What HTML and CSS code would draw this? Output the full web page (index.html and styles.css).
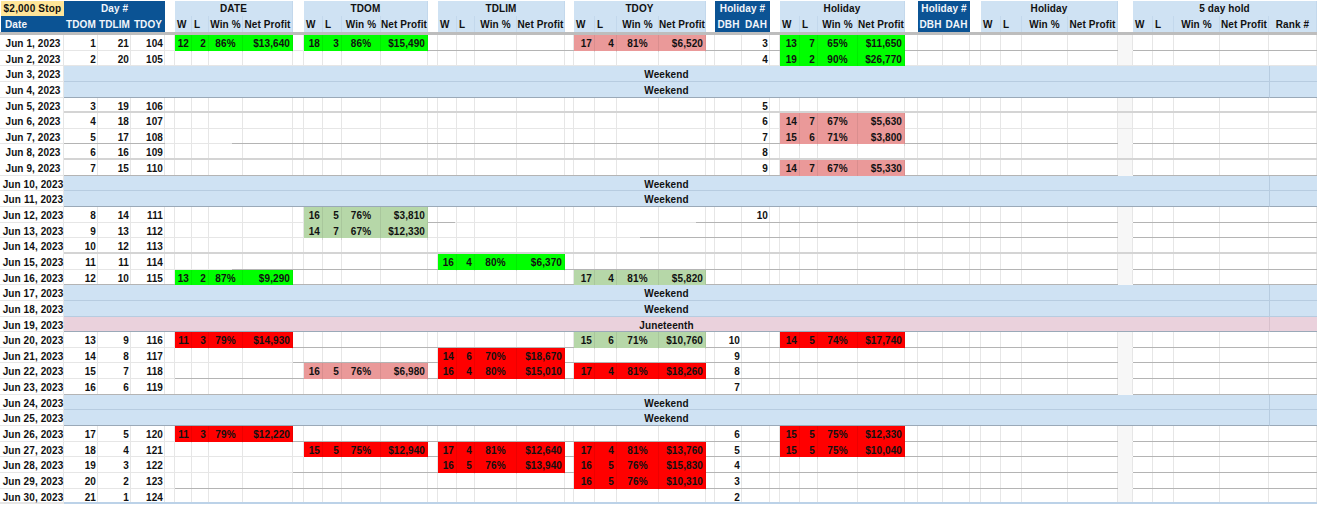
FILE: index.html
```html
<!DOCTYPE html>
<html lang="en">
<head>
<meta charset="utf-8">
<title>June 2023 seasonality sheet</title>
<link rel="stylesheet" href="styles.css">
</head>
<body>
<main class="sheet">
  <div class="hrow top">
    <div class="stop">$2,000 Stop</div>
    <div class="navy days-h">Day #</div>
    <div class="pale g-date">DATE</div>
    <div class="pale g-tdom">TDOM</div>
    <div class="pale g-tdlim">TDLIM</div>
    <div class="pale g-tdoy">TDOY</div>
    <div class="navy g-hn1">Holiday #</div>
    <div class="pale g-hol1">Holiday</div>
    <div class="navy g-hn2">Holiday #</div>
    <div class="pale g-hol2">Holiday</div>
    <div class="pale g-hold">5 day hold</div>
  </div>
  <div class="hrow sub">
    <div class="navy date-h">Date</div><div class="navy">TDOM</div><div class="navy">TDLIM</div><div class="navy">TDOY</div>
    <div class="pale cell-l c6">W</div><div class="pale cell-l">L</div><div class="pale">Win %</div><div class="pale">Net Profit</div>
    <div class="pale cell-l c11">W</div><div class="pale cell-l">L</div><div class="pale">Win %</div><div class="pale">Net Profit</div>
    <div class="pale cell-l c16">W</div><div class="pale cell-l">L</div><div class="pale">Win %</div><div class="pale">Net Profit</div>
    <div class="pale cell-l c21">W</div><div class="pale cell-l">L</div><div class="pale">Win %</div><div class="pale">Net Profit</div>
    <div class="navy c26">DBH</div><div class="navy">DAH</div>
    <div class="pale cell-l c29">W</div><div class="pale cell-l">L</div><div class="pale">Win %</div><div class="pale">Net Profit</div>
    <div class="navy c34">DBH</div><div class="navy">DAH</div>
    <div class="pale cell-l c37">W</div><div class="pale cell-l">L</div><div class="pale">Win %</div><div class="pale">Net Profit</div>
    <div class="pale cell-l c42">W</div><div class="pale cell-l">L</div><div class="pale">Win %</div><div class="pale">Net Profit</div><div class="pale">Rank #</div>
  </div>
  <div class="rule"></div>
  <div class="body">
    <div class="guides" aria-hidden="true">
      <i></i><i></i><i></i><i></i><i></i><i></i><i></i><i></i><i></i><i></i>
      <i></i><i></i><i></i><i></i><i></i><i></i><i></i><i></i><i></i><i></i>
      <i></i><i></i><i></i><i></i><i></i><i></i><i></i><i></i><i></i><i></i>
      <i></i><i></i><i></i><i></i><i></i><i></i><i></i><i></i><i></i><i></i>
      <i class="wide"></i><i></i><i></i><i></i><i></i><i></i>
    </div>

    <div class="row from428"><b>Jun 1, 2023</b><span>1</span><span>21</span><span>104</span>
      <div class="res g-date green"><span>12</span><span>2</span><span>86%</span><span>$13,640</span></div>
      <div class="res g-tdom green"><span>18</span><span>3</span><span>86%</span><span>$15,490</span></div>
      <div class="res g-tdoy rose"><span>17</span><span>4</span><span>81%</span><span>$6,520</span></div>
      <span class="dah">3</span>
      <div class="res g-hol1 green"><span>13</span><span>7</span><span>65%</span><span>$11,650</span></div>
    </div>
    <div class="row"><b>Jun 2, 2023</b><span>2</span><span>20</span><span>105</span>
      <span class="dah">4</span>
      <div class="res g-hol1 green"><span>19</span><span>2</span><span>90%</span><span>$26,770</span></div>
    </div>
    <div class="row"><b>Jun 3, 2023</b><div class="band">Weekend</div><div class="band-end"></div></div>
    <div class="row"><b>Jun 4, 2023</b><div class="band closing">Weekend</div><div class="band-end closing"></div></div>
    <div class="row thick"><b>Jun 5, 2023</b><span>3</span><span>19</span><span>106</span><span class="dah">5</span></div>
    <div class="row"><b>Jun 6, 2023</b><span>4</span><span>18</span><span>107</span><span class="dah">6</span>
      <div class="res g-hol1 rose"><span>14</span><span>7</span><span>67%</span><span>$5,630</span></div>
    </div>
    <div class="row from232"><b>Jun 7, 2023</b><span class="ul">5</span><span class="ul">17</span><span class="ul">108</span><span class="dah">7</span>
      <div class="res g-hol1 rose"><span>15</span><span>6</span><span>71%</span><span>$3,800</span></div>
    </div>
    <div class="row thick"><b>Jun 8, 2023</b><span>6</span><span>16</span><span>109</span><span class="dah">8</span></div>
    <div class="row from64"><b>Jun 9, 2023</b><span>7</span><span>15</span><span>110</span><span class="dah">9</span>
      <div class="res g-hol1 rose"><span>14</span><span>7</span><span>67%</span><span>$5,330</span></div>
    </div>
    <div class="row"><b>Jun 10, 2023</b><div class="band">Weekend</div><div class="band-end"></div></div>
    <div class="row"><b>Jun 11, 2023</b><div class="band closing">Weekend</div><div class="band-end closing"></div></div>
    <div class="row split"><b>Jun 12, 2023</b><span>8</span><span>14</span><span>111</span>
      <div class="res g-tdom sage"><span>16</span><span>5</span><span>76%</span><span>$3,810</span></div>
      <span class="dah">10</span>
    </div>
    <div class="row from640"><b>Jun 13, 2023</b><span>9</span><span>13</span><span>112</span>
      <div class="res g-tdom sage"><span>14</span><span>7</span><span>67%</span><span>$12,330</span></div>
    </div>
    <div class="row thick"><b>Jun 14, 2023</b><span>10</span><span>12</span><span>113</span></div>
    <div class="row from232"><b>Jun 15, 2023</b><span>11</span><span>11</span><span>114</span>
      <div class="res g-tdlim green"><span>16</span><span>4</span><span>80%</span><span>$6,370</span></div>
    </div>
    <div class="row from64"><b>Jun 16, 2023</b><span>12</span><span>10</span><span>115</span>
      <div class="res g-date green"><span>13</span><span>2</span><span>87%</span><span>$9,290</span></div>
      <div class="res g-tdoy sage"><span>17</span><span>4</span><span>81%</span><span>$5,820</span></div>
    </div>
    <div class="row"><b>Jun 17, 2023</b><div class="band">Weekend</div><div class="band-end"></div></div>
    <div class="row"><b>Jun 18, 2023</b><div class="band">Weekend</div><div class="band-end"></div></div>
    <div class="row"><b>Jun 19, 2023</b><div class="band holiday closing">Juneteenth</div><div class="band-end holiday closing"></div></div>
    <div class="row from175"><b>Jun 20, 2023</b><span>13</span><span>9</span><span>116</span>
      <div class="res g-date red"><span>11</span><span>3</span><span>79%</span><span>$14,930</span></div>
      <div class="res g-tdoy sage"><span>15</span><span>6</span><span>71%</span><span>$10,760</span></div>
      <span class="dbh">10</span>
      <div class="res g-hol1 red"><span>14</span><span>5</span><span>74%</span><span>$17,740</span></div>
    </div>
    <div class="row from293"><b>Jun 21, 2023</b><span>14</span><span>8</span><span>117</span>
      <div class="res g-tdlim red"><span>14</span><span>6</span><span>70%</span><span>$18,670</span></div>
      <span class="dbh">9</span>
    </div>
    <div class="row from175"><b>Jun 22, 2023</b><span>15</span><span>7</span><span>118</span>
      <div class="res g-tdom rose"><span>16</span><span>5</span><span>76%</span><span>$6,980</span></div>
      <div class="res g-tdlim red"><span>16</span><span>4</span><span>80%</span><span>$15,010</span></div>
      <div class="res g-tdoy red"><span>17</span><span>4</span><span>81%</span><span>$18,260</span></div>
      <span class="dbh">8</span>
    </div>
    <div class="row from64"><b>Jun 23, 2023</b><span>16</span><span>6</span><span>119</span><span class="dbh">7</span></div>
    <div class="row"><b>Jun 24, 2023</b><div class="band">Weekend</div><div class="band-end"></div></div>
    <div class="row"><b>Jun 25, 2023</b><div class="band closing">Weekend</div><div class="band-end closing"></div></div>
    <div class="row from293"><b>Jun 26, 2023</b><span>17</span><span>5</span><span>120</span>
      <div class="res g-date red"><span>11</span><span>3</span><span>79%</span><span>$12,220</span></div>
      <span class="dbh">6</span>
      <div class="res g-hol1 red"><span>15</span><span>5</span><span>75%</span><span>$12,330</span></div>
    </div>
    <div class="row from428"><b>Jun 27, 2023</b><span>18</span><span>4</span><span>121</span>
      <div class="res g-tdom red"><span>15</span><span>5</span><span>75%</span><span>$12,940</span></div>
      <div class="res g-tdlim red"><span>17</span><span>4</span><span>81%</span><span>$12,640</span></div>
      <div class="res g-tdoy red"><span>17</span><span>4</span><span>81%</span><span>$13,760</span></div>
      <span class="dbh">5</span>
      <div class="res g-hol1 red"><span>15</span><span>5</span><span>75%</span><span>$10,040</span></div>
    </div>
    <div class="row from293"><b>Jun 28, 2023</b><span>19</span><span>3</span><span>122</span>
      <div class="res g-tdlim red"><span>16</span><span>5</span><span>76%</span><span>$13,940</span></div>
      <div class="res g-tdoy red"><span>16</span><span>5</span><span>76%</span><span>$15,830</span></div>
      <span class="dbh">4</span>
    </div>
    <div class="row from175"><b>Jun 29, 2023</b><span>20</span><span>2</span><span>123</span>
      <div class="res g-tdoy red"><span>16</span><span>5</span><span>76%</span><span>$10,310</span></div>
      <span class="dbh">3</span>
    </div>
    <div class="row last"><b>Jun 30, 2023</b><span>21</span><span>1</span><span>124</span><span class="dbh">2</span></div>
  </div>
</main>
</body>
</html>
```
FILE: styles.css
```css
:root {
  --cols: 64px 34px 33px 34px 10px 17px 17px 34px 50px 11px 19px 19px 39px 47px 10px 19px 18px 42px 48px 9px 21px 22px 42px 47px 9px 27px 28px 10px 20px 18px 40px 47px 13px 25px 27px 11px 20px 21px 46px 50px 15px 20px 21px 46px 49px 48px;
  --soft: #e6e6e6;
  --dark: #b4b4b4;
  --gap: #f7f7f7;
  --pale: #cfe2f3;
  --navy: #0b5394;
}
* { box-sizing: border-box; }
html, body { margin: 0; background: #fff; }
body { width: 1317px; height: 506px; overflow: hidden; }
.sheet {
  font: bold 10px/15px "Liberation Sans", Arial, sans-serif;
  letter-spacing: .1px;
  color: #111;
  padding-top: 1px;
}
.hrow { display: grid; grid-template-columns: var(--cols); text-align: center; }
.hrow.top { height: 15px; }
.hrow.sub { height: 16px; grid-template-rows: 16px; line-height: 17px; }
.navy { background: var(--navy); color: #f2f6fb; }
.pale { background: var(--pale); border-right: 1px solid #c3d8ec; }
.stop { background: #ffe599; margin-left: 1px; white-space: nowrap; letter-spacing: .2px; }
.days-h { grid-column: 2 / 5; }
.date-h { text-align: left; padding-left: 4px; margin-left: 1px; }
.cell-l { text-align: left; padding-left: 2px; }
.g-date { grid-column: 6 / 10; }
.g-tdom { grid-column: 11 / 15; }
.g-tdlim { grid-column: 16 / 20; }
.g-tdoy { grid-column: 21 / 25; }
.g-hn1 { grid-column: 26 / 28; }
.g-hol1 { grid-column: 29 / 33; }
.g-hn2 { grid-column: 34 / 36; }
.g-hol2 { grid-column: 37 / 41; }
.g-hold { grid-column: 42 / 47; }
.c6 { grid-column: 6; }
.c11 { grid-column: 11; }
.c16 { grid-column: 16; }
.c21 { grid-column: 21; }
.c26 { grid-column: 26; }
.c29 { grid-column: 29; }
.c34 { grid-column: 34; }
.c37 { grid-column: 37; }
.c42 { grid-column: 42; }
.rule { height: 3px; background: #bdbdbd; }
.body {
  position: relative;
  display: grid;
  grid-auto-rows: 15.65px;
}
.guides {
  position: absolute;
  inset: 0;
  display: grid;
  grid-template-columns: var(--cols);
}
.guides i { border-right: 1px solid var(--soft); }
.guides i.wide { background: var(--gap); }
.row {
  --from: 1317px;
  --line:
    linear-gradient(90deg,
      var(--soft) var(--from), var(--dark) var(--from),
      var(--dark) 1118px, var(--gap) 1118px, var(--gap) 1133px, var(--dark) 1133px);
  position: relative;
  display: grid;
  grid-template-columns: var(--cols);
  grid-template-rows: 15.65px;
  line-height: 17px;
  text-align: right;
  background: var(--line) left bottom / 100% 1px no-repeat;
}
.row > b { text-align: center; white-space: nowrap; padding-left: 2px; }
.row > span { padding-right: 2px; }
.row > .ul { box-shadow: inset 0 -1px var(--dark); }
.from64 { --from: 64px; }
.from175 { --from: 175px; }
.from232 { --from: 232px; }
.from293 { --from: 293px; }
.from428 { --from: 428px; }
.from640 { --from: 640px; }
.row.thick {
  background: linear-gradient(90deg, transparent 64px, #d4d4d4 64px) left bottom / 100% 2px no-repeat;
}
.row.split {
  background:
    linear-gradient(90deg, transparent 339px, var(--dark) 339px, var(--dark) 455px, transparent 455px) left bottom / 100% 1px no-repeat,
    var(--line) left bottom / 100% 1px no-repeat;
  --from: 696px;
}
.row.last {
  background: linear-gradient(90deg, var(--soft) 64px, #bcd2e8 64px) left bottom / 100% 2px no-repeat;
}
.dbh { grid-column: 26; }
.dah { grid-column: 27; }
.res {
  display: grid;
  grid-template-columns: subgrid;
  text-align: right;
}
.res > span { padding-right: 2px; border-right: 1px solid rgba(0, 0, 0, .07); white-space: nowrap; }
.res > span:nth-child(3) { text-align: center; padding-right: 0; }
.green { background: #00ff00; }
.red { background: #ff0000; }
.rose { background: #ea9999; }
.sage { background: #b6d7a8; }
.band {
  grid-column: 2 / 46;
  background: var(--pale);
  border-bottom: 1px solid #b7cce0;
  text-align: center;
}
.band-end {
  grid-column: 46;
  background: var(--pale);
  border-bottom: 1px solid #b7cce0;
  border-left: 1px solid #b7cce0;
}
.band.closing, .band-end.closing { border-bottom-color: #9aa9b8; }
.band.holiday, .band-end.holiday { background: #ead1dc; border-left-color: #d8c0cc; }
.band.holiday { border-left: 0; }
```
